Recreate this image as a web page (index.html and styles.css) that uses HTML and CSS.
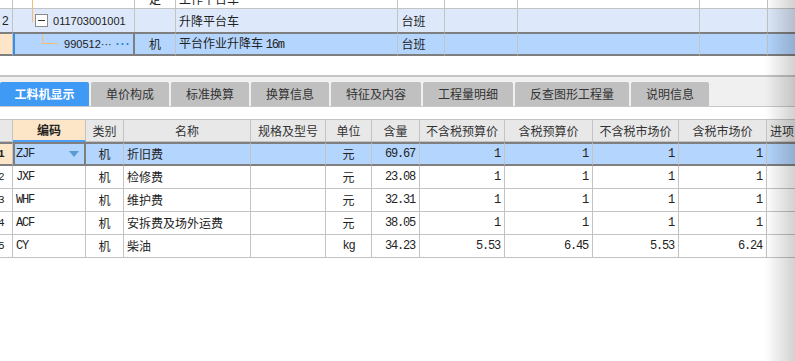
FILE: index.html
```html
<!DOCTYPE html>
<html lang="zh">
<head>
<meta charset="utf-8">
<title>工料机显示</title>
<link rel="stylesheet" href="styles.css">
</head>
<body>
<div class="page">
  <div class="top-wrap">
    <table class="grid top-grid">
      <colgroup>
        <col style="width:13px"><col style="width:121px"><col style="width:41px"><col style="width:221px"><col style="width:46px"><col style="width:73px"><col style="width:181px"><col style="width:67px"><col style="width:60px">
      </colgroup>
      <tr class="row-cut">
        <td class="rh"></td>
        <td class="tree-cell"><div class="tree"><span class="vline-full"></span></div></td>
        <td class="c">定</td>
        <td>工作平台车</td>
        <td></td><td></td><td></td><td></td><td></td>
      </tr>
      <tr class="row-parent">
        <td class="rh">2</td>
        <td class="tree-cell"><div class="tree"><span class="vline-top"></span><span class="box"><span class="minus"></span></span><span class="code-sans">011703001001</span></div></td>
        <td></td>
        <td>升降平台车</td>
        <td>台班</td>
        <td></td><td></td><td></td><td></td>
      </tr>
      <tr class="row-sel">
        <td class="rh peach"></td>
        <td class="edit-top"><div class="tree child"><span class="elbow"></span><span class="code-sans">990512···</span><span class="more">···</span></div></td>
        <td class="c">机</td>
        <td>平台作业升降车 <span class="mono">16m</span></td>
        <td>台班</td>
        <td></td><td></td><td></td><td></td>
      </tr>
    </table>
  </div>

  <div class="tabstrip">
    <div class="tab active w89">工料机显示</div>
    <div class="tab w78">单价构成</div>
    <div class="tab w78">标准换算</div>
    <div class="tab w78">换算信息</div>
    <div class="tab w90">特征及内容</div>
    <div class="tab w90">工程量明细</div>
    <div class="tab w114">反查图形工程量</div>
    <div class="tab w78">说明信息</div>
  </div>

  <table class="grid bottom-grid">
    <colgroup>
      <col style="width:13px"><col style="width:73px"><col style="width:38px"><col style="width:127px"><col style="width:75px"><col style="width:46px"><col style="width:48px"><col style="width:85px"><col style="width:88px"><col style="width:86px"><col style="width:88px"><col style="width:60px">
    </colgroup>
    <tr class="head">
      <th class="rh"></th>
      <th class="key">编码</th>
      <th>类别</th>
      <th>名称</th>
      <th>规格及型号</th>
      <th>单位</th>
      <th>含量</th>
      <th>不含税预算价</th>
      <th>含税预算价</th>
      <th>不含税市场价</th>
      <th>含税市场价</th>
      <th class="lft">进项</th>
    </tr>
    <tr class="row-sel">
      <td class="rh peach bold">1</td>
      <td class="edit"><div class="drop"><span class="mono">ZJF</span><span class="tri"></span></div></td>
      <td class="c">机</td>
      <td>折旧费</td>
      <td></td>
      <td class="c">元</td>
      <td class="n mono">69.67</td>
      <td class="n mono">1</td>
      <td class="n mono">1</td>
      <td class="n mono">1</td>
      <td class="n mono">1</td>
      <td></td>
    </tr>
    <tr>
      <td class="rh">2</td>
      <td class="mono code">JXF</td>
      <td class="c">机</td>
      <td>检修费</td>
      <td></td>
      <td class="c">元</td>
      <td class="n mono">23.08</td>
      <td class="n mono">1</td>
      <td class="n mono">1</td>
      <td class="n mono">1</td>
      <td class="n mono">1</td>
      <td></td>
    </tr>
    <tr>
      <td class="rh">3</td>
      <td class="mono code">WHF</td>
      <td class="c">机</td>
      <td>维护费</td>
      <td></td>
      <td class="c">元</td>
      <td class="n mono">32.31</td>
      <td class="n mono">1</td>
      <td class="n mono">1</td>
      <td class="n mono">1</td>
      <td class="n mono">1</td>
      <td></td>
    </tr>
    <tr>
      <td class="rh">4</td>
      <td class="mono code">ACF</td>
      <td class="c">机</td>
      <td>安拆费及场外运费</td>
      <td></td>
      <td class="c">元</td>
      <td class="n mono">38.05</td>
      <td class="n mono">1</td>
      <td class="n mono">1</td>
      <td class="n mono">1</td>
      <td class="n mono">1</td>
      <td></td>
    </tr>
    <tr>
      <td class="rh">5</td>
      <td class="mono code">CY</td>
      <td class="c">机</td>
      <td>柴油</td>
      <td></td>
      <td class="c mono">kg</td>
      <td class="n mono">34.23</td>
      <td class="n mono">5.53</td>
      <td class="n mono">6.45</td>
      <td class="n mono">5.53</td>
      <td class="n mono">6.24</td>
      <td></td>
    </tr>
  </table>
</div>
<div class="edge-shade"></div>
</body>
</html>
```

FILE: styles.css
```css
* { box-sizing: border-box; }
html, body { margin: 0; padding: 0; background: #ffffff; }
body {
  width: 795px;
  height: 361px;
  overflow: hidden;
  font-family: "Noto Sans CJK SC", "Noto Sans", sans-serif;
  font-size: 12px;
  color: #222222;
}
.page { width: 795px; overflow: hidden; }

.grid {
  border-collapse: separate;
  border-spacing: 0;
  table-layout: fixed;
}
.grid td, .grid th {
  border-right: 1px solid #c3c3c3;
  border-bottom: 1px solid #c3c3c3;
  padding: 0 3px;
  white-space: nowrap;
  overflow: hidden;
  font-weight: normal;
  line-height: 16px;
}

/* top grid */
.top-wrap { height: 75px; overflow: hidden; }
.top-grid { width: 828px; margin-top: -15px; }
.top-grid tr.row-cut td { height: 23px; vertical-align: bottom; padding-bottom: 1px; }
.top-grid tr.row-parent td { height: 23px; background: #dde9fb; border-bottom: none; }
.top-grid tr.row-sel td {
  height: 24px;
  background: #b4d5fd;
  border-top: 2px solid #7f7f7f;
  border-bottom: 2px solid #7f7f7f;
}
.top-grid tr.row-sel td.peach { background: #fde6c8; }
.top-grid td.edit-top {
  background: #ffffff;
  border-left: 2px solid #3a8ee6;
  border-right: 2px solid #7f7f7f;
  padding: 0;
}
.top-grid td.tree-cell { padding: 0; }
.top-grid td.rh { padding: 0 0 0 2px; font-family: "Liberation Sans", sans-serif; }

.tree { display: flex; align-items: center; height: 22px; }
.vline-full { display: block; width: 1px; height: 23px; margin-left: 19px; background: #f6bd72; }
.vline-top { display: block; width: 1px; height: 13px; margin-left: 19px; background: #f6bd72; align-self: flex-start; margin-top: -1px; }
.box {
  display: flex;
  align-items: center;
  justify-content: center;
  width: 13px; height: 13px;
  margin-left: 2px;
  border: 1px solid #8a8a8a;
  background: #ffffff;
}
.minus { display: block; width: 7px; height: 1px; background: #333333; }
.code-sans { font-family: "Liberation Sans", sans-serif; font-size: 11px; margin-left: 5px; color: #222; }
.tree.child { align-items: flex-start; height: 20px; }
.elbow {
  display: block;
  width: 16px; height: 10px;
  margin-left: 27px;
  border-left: 1px solid #f6bd72;
  border-bottom: 1px solid #f6bd72;
}
.tree.child .code-sans { margin-left: 6px; margin-top: 2px; }
.more { color: #2f7fd0; font-family: "Liberation Sans", sans-serif; font-weight: bold; margin-left: 4px; margin-top: 2px; letter-spacing: 1px; }

.mono { font-family: "Liberation Mono", monospace; font-size: 12px; letter-spacing: -1.2px; }
.code { padding-left: 2px; }
.c { text-align: center; }
.n { text-align: right; }
.grid td.n { padding-right: 4px; }

/* tabs */
.tabstrip {
  display: flex;
  gap: 2px;
  height: 32px;
  padding-top: 5px;
  border-top: 2px solid #c4c4c4;
  border-bottom: 1px solid #c8c8c8;
  background: #f0f0f0;
  margin-bottom: 12px;
}
.tab {
  height: 24px;
  background: #c0c0c0;
  color: #333333;
  border-radius: 2px 2px 0 0;
  font-size: 12px;
  line-height: 24px;
  text-align: center;
}
.tab.active { background: #3f9af6; color: #ffffff; font-weight: bold; }
.w89 { width: 89px; }
.w78 { width: 78px; }
.w90 { width: 90px; }
.w114 { width: 114px; }

/* bottom grid */
.bottom-grid { width: 827px; }
.bottom-grid tr.head th {
  height: 23px;
  background: #e8e8e8;
  border-top: 1px solid #c3c3c3;
  color: #333333;
  text-align: center;
}
.bottom-grid tr.head th.key {
  background: #fde6c8;
  font-weight: bold;
  color: #222;
  border-bottom: 2px solid #4a9cf5;
}
.bottom-grid tr.head th.lft { text-align: left; }
.bottom-grid td { height: 23px; }
.bottom-grid tr.row-sel td {
  height: 24px;
  background: #b4d5fd;
  border-top: 2px solid #7f7f7f;
  border-bottom: 2px solid #7f7f7f;
}
.bottom-grid tr.row-sel td.peach { background: #fde6c8; }
.bottom-grid td.edit {
  background: #ffffff;
  border-left: 2px solid #7f7f7f;
  border-right: 2px solid #7f7f7f;
  padding: 0 4px 0 1px;
}
.bottom-grid td.rh, .bottom-grid th.rh {
  padding: 0;
  text-indent: -2px;
  font-family: "Liberation Mono", monospace;
  font-size: 11px;
  letter-spacing: 0;
}
.bottom-grid td.bold { font-weight: bold; }
.drop { display: flex; align-items: center; justify-content: space-between; }
.tri {
  display: block;
  width: 0; height: 0;
  border-left: 5px solid transparent;
  border-right: 5px solid transparent;
  border-top: 6px solid #5b9bd5;
  margin-right: 1px;
}

.edge-shade {
  position: fixed;
  top: 0; right: 0;
  width: 30px; height: 361px;
  background: linear-gradient(to right, rgba(0,0,0,0), rgba(0,0,0,0.18));
  pointer-events: none;
}
```
